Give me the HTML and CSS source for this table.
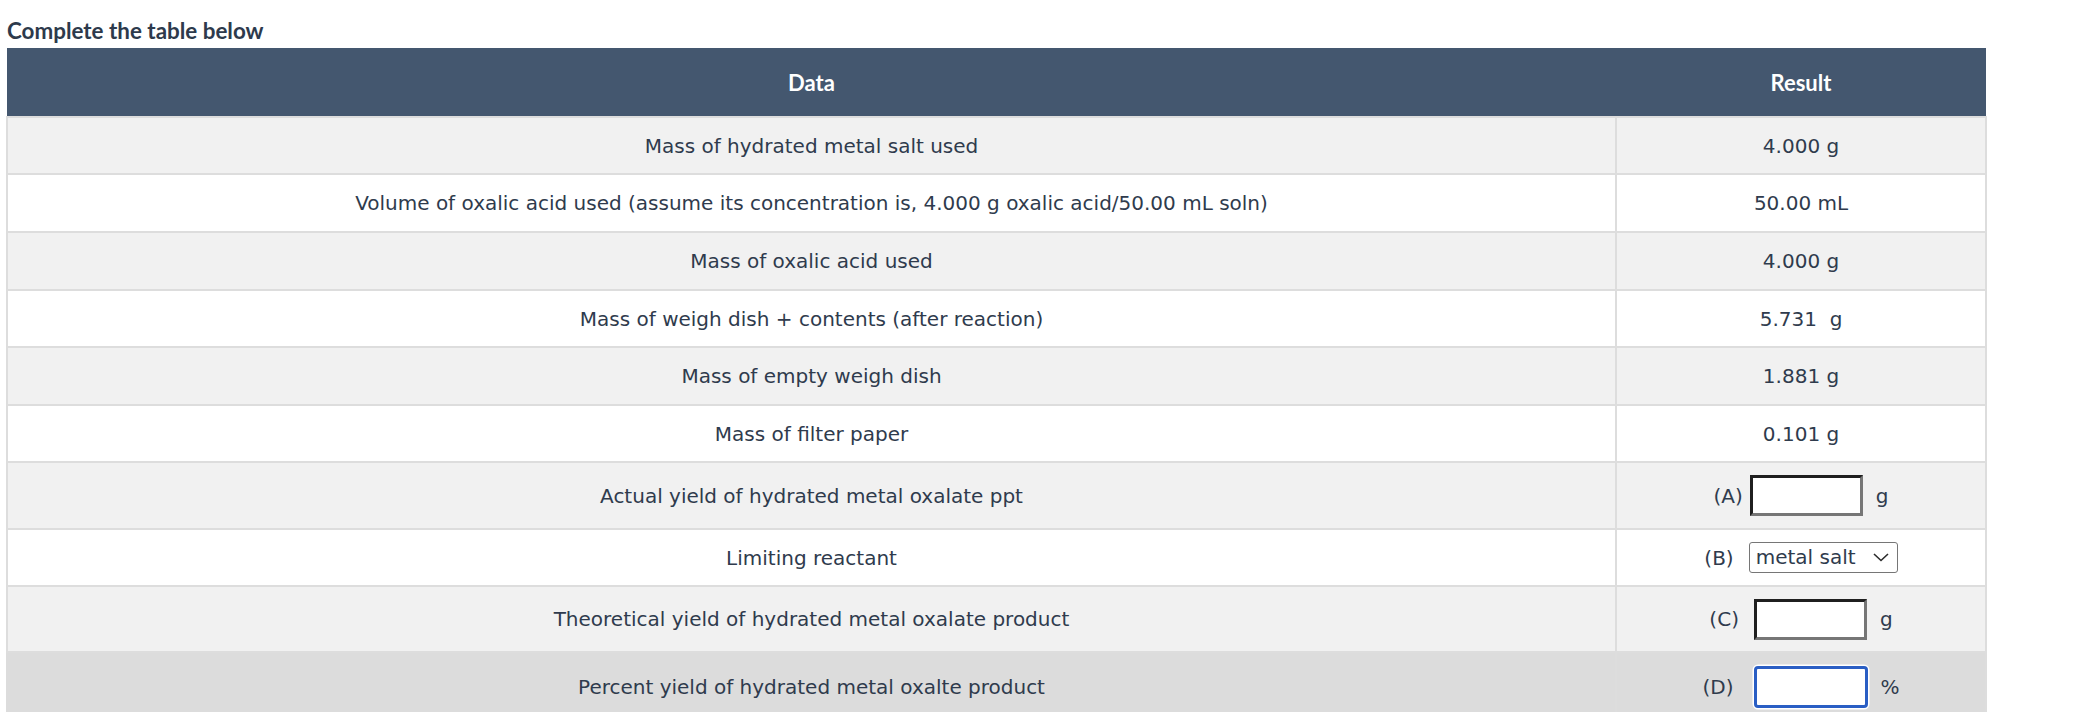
FILE: index.html
```html
<!DOCTYPE html>
<html lang="en">
<head>
<meta charset="utf-8">
<title>Complete the table below</title>
<link rel="stylesheet" href="styles.css">
</head>
<body>
<h1 class="title">Complete the table below</h1>
<table class="data-table">
  <colgroup><col class="col-data"><col class="col-result"></colgroup>
  <thead>
    <tr><th>Data</th><th>Result</th></tr>
  </thead>
  <tbody>
    <tr class="row-grey h57"><td>Mass of hydrated metal salt used</td><td>4.000 g</td></tr>
    <tr class="row-white h58"><td>Volume of oxalic acid used (assume its concentration is, 4.000 g oxalic acid/50.00 mL soln)</td><td>50.00 mL</td></tr>
    <tr class="row-grey h58"><td>Mass of oxalic acid used</td><td>4.000 g</td></tr>
    <tr class="row-white h57"><td>Mass of weigh dish + contents (after reaction)</td><td>5.731&nbsp; g</td></tr>
    <tr class="row-grey h58"><td>Mass of empty weigh dish</td><td>1.881 g</td></tr>
    <tr class="row-white h57"><td>Mass of filter paper</td><td>0.101 g</td></tr>
    <tr class="row-grey h67"><td>Actual yield of hydrated metal oxalate ppt</td><td><div class="answer"><span class="label gap-a">(A)</span><input class="box" type="text"><span class="unit">g</span></div></td></tr>
    <tr class="row-white h57"><td>Limiting reactant</td><td><div class="answer"><span class="label gap-b">(B)</span><span class="select-wrap"><select class="select"><option>metal salt</option><option>oxalic acid</option></select><svg class="chevron" width="16" height="9" viewBox="0 0 16 9"><path d="M1 1 L8 7.5 L15 1" fill="none" stroke="#2b2b2b" stroke-width="1.6"/></svg></span></div></td></tr>
    <tr class="row-grey h66"><td>Theoretical yield of hydrated metal oxalate product</td><td><div class="answer"><span class="label gap-c">(C)</span><input class="box" type="text"><span class="unit">g</span></div></td></tr>
    <tr class="row-hover h70"><td>Percent yield of hydrated metal oxalte product</td><td><div class="answer"><span class="label gap-d">(D)</span><input class="box box-focus" type="text"><span class="unit">%</span></div></td></tr>
  </tbody>
</table>
</body>
</html>
```

FILE: styles.css
```css
html, body {
  margin: 0;
  padding: 0;
  background: #ffffff;
}

body {
  font-family: "DejaVu Sans", sans-serif;
  color: #2f3b4d;
}

.title {
  margin: 0 0 4px 0;
  padding: 18px 0 0 7px;
  font-family: Lato, "Noto Sans", sans-serif;
  font-weight: 700;
  font-size: 22.4px;
  line-height: 26px;
  color: #2d3a4c;
}

.data-table {
  margin-left: 6px;
  width: 1979px;
  border-collapse: collapse;
  table-layout: fixed;
}

.col-data { width: 1609px; }
.col-result { width: 370px; }

.data-table th {
  height: 68px;
  padding: 0;
  background: #44576f;
  color: #ffffff;
  font-family: Lato, "Noto Sans", sans-serif;
  font-weight: 700;
  font-size: 22px;
  text-align: center;
  vertical-align: middle;
  border: 0;
}

.data-table td {
  padding: 0;
  border: 2px solid #dddddd;
  font-size: 20px;
  text-align: center;
  vertical-align: middle;
  color: #2f3b4d;
}

.row-grey { background: #f1f1f1; }
.row-white { background: #ffffff; }
.row-hover { background: #dcdcdc; }
.row-hover td { border-color: #dcdcdc #dddddd #dcdcdc #dcdcdc; }

.h57 { height: 57px; }
.h58 { height: 58px; }
.h66 { height: 66px; }
.h67 { height: 67px; }
.h70 { height: 70px; }

.answer {
  display: flex;
  align-items: center;
  justify-content: center;
}

.label { display: inline-block; }
.gap-a { margin-right: 7px; }
.gap-b { margin-right: 15px; }
.gap-c { margin-right: 15px; }
.gap-d { margin-right: 20px; }

.unit {
  display: inline-block;
  margin-left: 13px;
  min-width: 12px;
  text-align: left;
}

.box {
  box-sizing: border-box;
  width: 113px;
  height: 41px;
  margin: 0;
  padding: 0 4px;
  border-style: solid;
  border-width: 3px;
  border-color: #1f1f1f #767676 #767676 #1f1f1f;
  background: #ffffff;
  font-family: "DejaVu Sans", sans-serif;
  font-size: 18px;
}

.box-focus {
  width: 114px;
  height: 42px;
  border: 3px solid #2a5ec4;
  border-radius: 4px;
  box-shadow: 0 0 0 1.5px #ffffff;
  outline: none;
}

.select-wrap {
  position: relative;
  display: inline-block;
  height: 31px;
}

.select {
  -webkit-appearance: none;
  appearance: none;
  box-sizing: border-box;
  width: 149px;
  height: 31px;
  margin: 0;
  padding: 0 0 0 6px;
  border: 1px solid #767676;
  border-radius: 3px;
  background: #ffffff;
  color: #2f3b4d;
  font-family: "DejaVu Sans", sans-serif;
  font-size: 20px;
  line-height: 29px;
}

.chevron {
  position: absolute;
  right: 9px;
  top: 11px;
  pointer-events: none;
}
```
